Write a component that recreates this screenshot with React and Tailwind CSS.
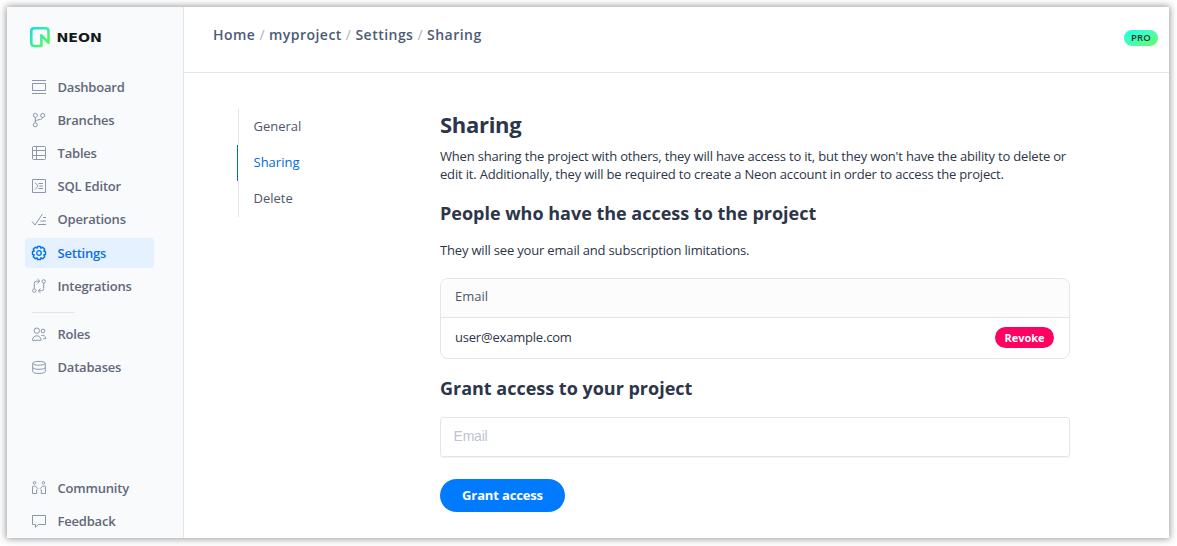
import React from 'react';

const Icon = ({ children }) => (
  <svg width="16" height="16" viewBox="0 0 16 16" fill="none" stroke="currentColor" strokeWidth="1" className="shrink-0">
    {children}
  </svg>
);

const icons = {
  Dashboard: (
    <>
      <path d="M1 1.5h14M1 14.5h14" />
      <path d="M1.5 4.5h13v7h-13z" />
    </>
  ),
  Branches: (
    <>
      <circle cx="4.3" cy="3.4" r="2" />
      <circle cx="11.7" cy="3.4" r="2" />
      <circle cx="4.3" cy="12.8" r="2" />
      <path d="M4.3 5.4v5.4M11.7 5.4c0 3.2-7.4 1.6-7.4 4.4" />
    </>
  ),
  Tables: (
    <>
      <rect x="1.5" y="1.5" width="13" height="13" rx="1" />
      <path d="M5.5 1.5v13M1.5 5.5h13M1.5 10.5h13" />
    </>
  ),
  'SQL Editor': (
    <>
      <path d="M1.5 1.5h13v13h-13z" />
      <path d="M4 4.5l3.2 3.5L4 11.5M7.5 5.5h4.5M8.5 8h3.5M7.5 10.5h4.5" />
    </>
  ),
  Operations: <path d="M1 10.5l3 3.5 7.5-11M12 6.5h3M9.5 10h5.5M7 13.5h8" />,
  Settings: (
    <>
      <path
        strokeWidth="1.4"
        strokeLinejoin="round"
        d="M6.5 1.5h3l.4 1.7 1.8-.9 2 2-.9 1.8 1.7.4v3l-1.7.4.9 1.8-2 2-1.8-.9-.4 1.7h-3l-.4-1.7-1.8.9-2-2 .9-1.8-1.7-.4v-3l1.7-.4-.9-1.8 2-2 1.8.9z"
      />
      <circle cx="8" cy="8" r="2.3" strokeWidth="1.3" />
    </>
  ),
  Integrations: (
    <>
      <circle cx="3.3" cy="12.6" r="1.7" />
      <circle cx="12.7" cy="3.4" r="1.7" />
      <path d="M3.3 10.9V5.5q0-2.3 2.3-2.3h3M6.5 1l2.3 2.2-2.3 2.2M12.7 5.1v5.4q0 2.3-2.3 2.3h-3M9.5 10.6l-2.3 2.2 2.3 2.2" />
    </>
  ),
  Roles: (
    <>
      <circle cx="5.8" cy="4.7" r="2.7" />
      <circle cx="12" cy="5" r="1.9" />
      <path d="M1.5 14.3c0-6 8.6-6 8.6 0zM10.2 9.7c2.5-1.2 4.5.4 4.5 3h-2.5" />
    </>
  ),
  Databases: (
    <>
      <ellipse cx="8" cy="4.3" rx="6.3" ry="1.9" />
      <path d="M1.7 4.3v8.2c0 2.6 12.6 2.6 12.6 0V4.3M1.7 8.4c0 2.5 12.6 2.5 12.6 0" />
    </>
  ),
  Community: (
    <>
      <circle cx="3.6" cy="2.8" r="1.3" />
      <circle cx="12.4" cy="2.8" r="1.3" />
      <path d="M1.5 13.5V7q0-.8.8-.8h2.2l2.2 2.3-1 1v4zM14.5 13.5V7q0-.8-.8-.8h-2.2L9.3 8.5l1 1v4z" />
    </>
  ),
  Feedback: <path d="M1.5 2.5h13v9H7.5L4.5 14.3v-2.8h-3z" />,
};

function NavItem({ label, active }) {
  return (
    <a
      className={
        active
          ? 'flex h-[30px] w-[129px] items-center gap-[10.5px] rounded-[4px] bg-[#e5f1ff] pl-[6px] text-[#0072ee]'
          : 'flex h-[30px] w-[129px] items-center gap-[10.5px] rounded-[4px] pl-[6px] text-[#8d96ae]'
      }
    >
      <Icon>{icons[label]}</Icon>
      <span
        className={
          active
            ? 'text-[13px] leading-[18px] font-semibold tracking-[-0.2px] whitespace-nowrap text-[#0d70e6]'
            : 'text-[13px] leading-[18px] font-semibold tracking-[-0.2px] whitespace-nowrap text-[#626879]'
        }
      >
        {label}
      </span>
    </a>
  );
}

function Logo() {
  return (
    <svg width="74" height="22" viewBox="0 0 74 22" className="ml-[29px] block" fill="none">
      <defs>
        <linearGradient id="markA" x1="0" y1="0" x2="1" y2="1">
          <stop offset="0" stopColor="#12dfe0" />
          <stop offset="0.6" stopColor="#43ee92" />
          <stop offset="1" stopColor="#62f755" />
        </linearGradient>
      </defs>
      <path
        d="M12.4 20H5.2Q2.3 20 2.3 17.1V5.2Q2.3 2.3 5.2 2.3h11.4q2.9 0 2.9 2.9v11.6l-7.1-7.5z"
        stroke="url(#markA)"
        strokeWidth="2.6"
        strokeLinejoin="round"
      />
      <text x="27.5" y="15.7" textLength="45.5" lengthAdjust="spacingAndGlyphs" fill="#17181a" fontSize="12.5" fontWeight="700" fontFamily="DejaVu Sans, sans-serif">
        NEON
      </text>
    </svg>
  );
}

function Sidebar() {
  return (
    <aside className="flex w-[177px] shrink-0 flex-col border-r border-[#e4e5e7] bg-[#f8fafc] pt-[19px]">
      <div className="-ml-[7px]">
        <Logo />
      </div>
      <nav className="mt-[24.07px] ml-[18px] flex flex-col gap-[3.1px]">
        {['Dashboard', 'Branches', 'Tables', 'SQL Editor', 'Operations', 'Settings', 'Integrations'].map((l) => (
          <NavItem key={l} label={l} active={l === 'Settings'} />
        ))}
      </nav>
      <div className="mt-[11px] ml-[25px] h-px w-[43px] bg-[#e4e5e7]" />
      <nav className="mt-[6px] ml-[18px] flex flex-col gap-[3px]">
        <NavItem label="Roles" />
        <NavItem label="Databases" />
      </nav>
      <nav className="mt-auto mb-[2px] ml-[18px] flex flex-col gap-[3px]">
        <NavItem label="Community" />
        <NavItem label="Feedback" />
      </nav>
    </aside>
  );
}

function Header() {
  return (
    <header className="flex h-[66px] items-start justify-between border-b border-[#e4e5e7] pr-[11px] pl-[29px]">
      <div className="mt-[18px] flex gap-[4px] text-[14px] leading-[20px] font-semibold tracking-[0.47px] whitespace-nowrap text-[#4c5b75]">
        <span>Home</span>
        <span className="font-normal text-[#a9b0bf]">/</span>
        <span>myproject</span>
        <span className="font-normal text-[#a9b0bf]">/</span>
        <span>Settings</span>
        <span className="font-normal text-[#a9b0bf]">/</span>
        <span>Sharing</span>
      </div>
      <span className="mt-[23px] flex h-4 w-[34px] items-center justify-center rounded-full bg-linear-to-br from-[#0ffff0] to-[#66fa60] pb-px text-[9.5px] leading-none font-semibold tracking-[0.2px] text-[#1a3a34]">
        PRO
      </span>
    </header>
  );
}

function Tabs() {
  return (
    <div className="mt-[36px] ml-[53px] flex h-[108px] w-[203px] shrink-0 flex-col text-[13px] leading-[18px] font-medium text-[#50566a]">
      <a className="ml-px flex h-9 items-center border-l border-[#e4e5e7] pb-[2px] pl-[14.5px]">General</a>
      <a className="flex h-9 items-center border-l border-[#0068e5] pb-[2px] pl-[15.5px] text-[#0068e5]">Sharing</a>
      <a className="ml-px flex h-9 items-center border-l border-[#e4e5e7] pb-[2px] pl-[14.5px]">Delete</a>
    </div>
  );
}

export default function App() {
  return (
    <div className="h-[546px] w-[1177px] overflow-hidden bg-white pt-[7px] pl-[7px] font-['Open_Sans',sans-serif]">
      <div className="flex h-[531px] w-[1162px] bg-white shadow-[0_0_7px_1px_rgba(0,0,0,0.4)]">
        <Sidebar />
        <div className="flex min-w-0 grow flex-col">
          <Header />
          <div className="flex">
            <Tabs />
            <main className="flex w-[630px] flex-col items-start text-[#2c3549]">
              <h1 className="mt-[37px] text-[22px] leading-[28px] font-bold tracking-[-0.3px]">Sharing</h1>
              <p className="mt-[9px] text-[13px] leading-[18px] tracking-[-0.18px] whitespace-nowrap">
                When sharing the project with others, they will have access to it, but they won't have the ability to delete or
                <br />
                edit it. Additionally, they will be required to create a Neon account in order to access the project.
              </p>
              <h2 className="mt-[18px] text-[18px] leading-[24px] font-bold tracking-[-0.01px]">People who have the access to the project</h2>
              <p className="mt-[16px] text-[13px] leading-[18px] tracking-[-0.18px]">They will see your email and subscription limitations.</p>
              <section className="mt-[19px] w-full overflow-hidden rounded-[8px] border border-[#e4e5e7] text-[13px] leading-[18px]">
                <div className="flex h-[39px] items-center border-b border-[#e4e5e7] bg-[#fcfcfc] px-[14px] pb-[4px] font-medium text-[#50566a]">
                  Email
                </div>
                <div className="flex h-[40px] items-center justify-between pr-[15px] pb-[2px] pl-[14px]">
                  <span className="tracking-[-0.2px]">user@example.com</span>
                  <button className="h-[21px] w-[59px] rounded-full bg-[#ff0160] text-[11px] leading-none font-bold text-white">Revoke</button>
                </div>
              </section>
              <h2 className="mt-[17px] text-[18px] leading-[24px] font-bold tracking-[-0.01px]">Grant access to your project</h2>
              <input
                placeholder="Email"
                className="mt-[17px] h-[40px] w-full rounded-[3px] border border-[#e4e5e7] px-[12.5px] pb-[3px] font-['Liberation_Sans',sans-serif] text-[14px] tracking-[-0.2px] shadow-[0_1px_1px_rgba(0,0,0,0.05)] placeholder:text-[#bfc3d2]"
              />
              <button className="mt-[22px] h-[33px] w-[125px] rounded-full bg-[#007bff] text-[13px] leading-none font-bold tracking-[-0.15px] text-white">
                Grant access
              </button>
            </main>
          </div>
        </div>
      </div>
    </div>
  );
}
